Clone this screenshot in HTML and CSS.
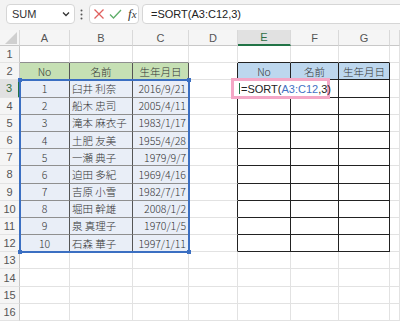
FILE: index.html
```html
<!DOCTYPE html>
<html lang="ja">
<head>
  <meta charset="UTF-8" />
  <meta name="viewport" content="width=device-width, initial-scale=1.0" />
  <title>SORT</title>
  <link rel="stylesheet" href="styles.css">
</head>
<body>

  <div class="toolbar">
    <div class="namebox">
      <span>SUM</span>
      <svg class="chev" width="8" height="6" viewBox="0 0 8 6"><path d="M1 1.5 L4 4.5 L7 1.5" fill="none" stroke="#333" stroke-width="1.3"/></svg>
    </div>
    <svg class="dots" width="3" height="11" viewBox="0 0 3 11">
      <circle cx="1.5" cy="1.5" r="1" fill="#555"/>
      <circle cx="1.5" cy="5.5" r="1" fill="#555"/>
      <circle cx="1.5" cy="9.5" r="1" fill="#555"/>
    </svg>
    <div class="fxbox">
      <svg width="12" height="12" viewBox="0 0 12 12"><path d="M1.5 1.5 L10.5 10.5 M10.5 1.5 L1.5 10.5" stroke="#e0605e" stroke-width="1.3" fill="none"/></svg>
      <svg width="13" height="12" viewBox="0 0 13 12"><path d="M1 6.5 L4.5 10 L12 2" stroke="#5fae6a" stroke-width="1.3" fill="none"/></svg>
      <span class="fx"><i>f</i><i>x</i></span>
    </div>
    <div class="formula">=SORT(A3:C12,3)</div>
  </div>

  <div class="sheet" id="sheet">
    <div class="range">
      <span class="knob k1"></span>
      <span class="knob k2"></span>
      <span class="knob k3"></span>
      <span class="knob k4"></span>
    </div>
    <div class="editbox">=SORT(<span class="ref">A3:C12</span>,3)<span class="caret"></span></div>
  </div>

  <script>
    const sheet = document.getElementById('sheet');
    const letters = ['A', 'B', 'C', 'D', 'E', 'F', 'G', 'H'];

    const data = [
      ['No', '名前', '生年月日'],
      ['1', '臼井 利奈', '2016/9/21'],
      ['2', '船木 忠司', '2005/4/11'],
      ['3', '滝本 麻衣子', '1983/1/17'],
      ['4', '土肥 友美', '1955/4/28'],
      ['5', '一瀬 典子', '1979/9/7'],
      ['6', '迫田 多紀', '1969/4/16'],
      ['7', '吉原 小雪', '1982/7/17'],
      ['8', '堀田 幹雄', '2008/1/2'],
      ['9', '泉 真理子', '1970/1/5'],
      ['10', '石森 華子', '1997/1/11']
    ];

    function add(cls, text) {
      const d = document.createElement('div');
      d.className = cls;
      d.textContent = text || '';
      sheet.appendChild(d);
    }

    // column headers
    add('corner');
    letters.forEach((l, i) => add('ch' + (l === 'E' ? ' active' : ''), i < 7 ? l : ''));

    for (let r = 1; r <= 16; r++) {
      add('rh' + (r === 3 ? ' active' : ''), r);

      for (let c = 1; c <= 8; c++) {
        let cls = 'c';
        let text = '';
        const inBody = r >= 2 && r <= 12;

        if (c <= 3 && inBody) {
          text = data[r - 2][c - 1];
          cls += r === 2 ? ' green' : ' sel';
          cls += ' lt';
          if (r === 2 || c === 1) cls += ' mid';
          else if (c === 3) cls += ' right';
        }
        if (c <= 3 && r === 1) cls += ' lt-top';

        if (c >= 5 && c <= 7 && inBody) {
          cls += ' rt';
          if (r === 2) {
            cls += ' blue mid';
            text = data[0][c - 5];
          }
        }
        if (c >= 5 && c <= 7 && r === 1) cls += ' rt-top';
        if (c === 4 && inBody) cls += ' rt-left';

        add(cls, text);
      }
    }
  </script>

</body>
</html>
```

FILE: styles.css
```css
* {
  box-sizing: border-box;
}

body {
  margin: 0;
  width: 400px;
  height: 322px;
  overflow: hidden;
  background: #fff;
  font-family: "Liberation Sans", Arial, sans-serif;
  color: #222;
}

/* formula bar */
.toolbar {
  height: 30px;
  background: #f3f3f3;
  display: flex;
  align-items: center;
  padding-left: 6px;
  padding-bottom: 2px;
  white-space: nowrap;
}

.namebox,
.fxbox,
.formula {
  height: 20px;
  background: #fff;
  border: 1px solid #d6d6d6;
  border-radius: 4px;
  display: flex;
  align-items: center;
}

.namebox {
  width: 69px;
  padding: 0 4px 0 5px;
  justify-content: space-between;
  font-size: 11px;
  color: #333;
}

.dots {
  margin: 0 6px 0 5px;
}

.fxbox {
  width: 50px;
  padding-left: 3px;
  gap: 4px;
}

.fx {
  font-family: "Liberation Serif", serif;
  font-size: 13px;
  color: #333;
  margin-left: 2px;
}

.fx i:last-child {
  font-size: 11px;
}

.formula {
  flex: 1;
  margin-left: 3px;
  margin-right: -10px;
  padding-left: 8px;
  font-size: 11px;
  color: #222;
}

/* grid */
.sheet {
  position: relative;
  display: grid;
  grid-template-columns: 20px 50px 63px 56px 49px 53px 48px 51px 10px;
  grid-template-rows: 16px repeat(16, 17.2px);
  font-family: "Noto Sans CJK JP", sans-serif;
}

.corner,
.ch,
.rh {
  background: #f5f5f5;
  font-family: "Liberation Sans", Arial, sans-serif;
  font-size: 11px;
  color: #555;
  display: flex;
  align-items: center;
  justify-content: center;
  border-right: 1px solid #d9d9d9;
  border-bottom: 1px solid #c8c8c8;
}

.corner {
  position: relative;
}

.corner::after {
  content: "";
  position: absolute;
  right: 2px;
  bottom: 1px;
  border-left: 12px solid transparent;
  border-bottom: 12px solid #cfcfcf;
}

.rh {
  border-bottom-color: #e3e3e3;
  border-right-color: #c8c8c8;
}

.ch.active {
  background: #e1e1e1;
  color: #2f6e45;
  border-bottom: 2px solid #217346;
}

.rh.active {
  background: #e1e1e1;
  color: #2f6e45;
  border-right: 2px solid #217346;
}

.c {
  border-right: 1px solid #e2e2e2;
  border-bottom: 1px solid #e2e2e2;
  font-size: 10.5px;
  font-weight: 300;
  color: #333;
  display: flex;
  align-items: center;
  padding: 0 2px;
  white-space: nowrap;
  overflow: hidden;
}

.c.mid {
  justify-content: center;
}

.c.right {
  justify-content: flex-end;
}

.c.green {
  background: #c6e0b4;
}

.c.blue {
  background: #bdd7ee;
}

.c.sel {
  background: #e9eef7;
}

.c.lt {
  border-right-color: #555;
  border-bottom-color: #8f8f8f;
}

.c.lt-top {
  border-bottom-color: #8f8f8f;
}

.c.rt {
  border-right-color: #222;
  border-bottom-color: #222;
}

.c.rt-top {
  border-bottom-color: #222;
}

.c.rt-left {
  border-right-color: #222;
}

/* reference range A3:C12 */
.range {
  position: absolute;
  left: 19px;
  top: 49px;
  width: 171px;
  height: 174px;
  border: 2px solid #3b6fc2;
  pointer-events: none;
}

.knob {
  position: absolute;
  width: 4px;
  height: 4px;
  background: #3b6fc2;
}

.k1 { left: -3px; top: -3px; }
.k2 { right: -3px; top: -3px; }
.k3 { left: -3px; bottom: -3px; }
.k4 { right: -3px; bottom: -3px; }

/* cell being edited */
.editbox {
  position: absolute;
  left: 231px;
  top: 48px;
  width: 99px;
  height: 21px;
  background: #fff;
  border: 3px solid #f4a7c6;
  padding-left: 7px;
  display: flex;
  align-items: center;
  font-family: "Liberation Sans", Arial, sans-serif;
  font-size: 11px;
  color: #222;
}

.editbox::before {
  content: "";
  position: absolute;
  left: 5px;
  top: 2px;
  bottom: 2px;
  width: 1px;
  background: #217346;
}

.ref {
  color: #4472c4;
}

.caret {
  display: inline-block;
  width: 1px;
  height: 12px;
  background: #111;
  margin-left: 1px;
}
```
